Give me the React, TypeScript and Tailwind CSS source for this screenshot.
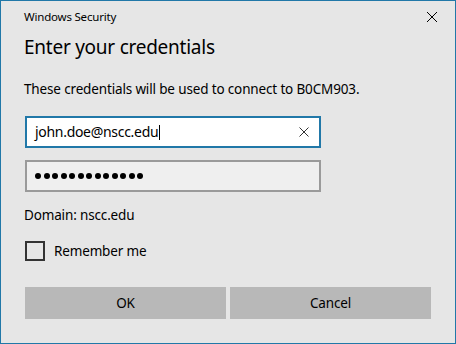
export default function App() {
  return (
    <div className="w-[456px] h-[344px] border border-[#2178a8] bg-[#e6e6e6] text-black font-['Noto_Sans',sans-serif] flex flex-col overflow-hidden">
      <div className="h-[32px] flex items-center justify-between pl-[23px] pr-[16px] shrink-0">
        <span className="text-[11.5px] leading-[16px] tracking-[-0.2px]">Windows Security</span>
        <svg width="12" height="12" viewBox="0 0 12 12" className="mr-[1px]">
          <path d="M1 1 L11 11 M11 1 L1 11" stroke="#000" strokeWidth="1" fill="none" />
        </svg>
      </div>
      <div className="pl-[23px] pr-[24px] flex flex-col">
        <div className="h-[29px] text-[19px] leading-[29px] tracking-[-0.25px]">Enter your credentials</div>
        <div className="mt-[17px] h-[20px] text-[13.5px] leading-[20px] tracking-[-0.15px]">These credentials will be used to connect to B0CM903.</div>
        <div className="mt-[17px] ml-px w-[296px] h-[32px] border-2 border-[#2178a8] bg-white flex items-center pl-[8px] pr-[8px]">
          <span className="text-[14px] leading-[20px] tracking-[-0.3px]">john.doe@nscc.edu</span>
          <span className="w-px h-[15px] bg-black ml-px" />
          <svg width="12" height="12" viewBox="0 0 12 12" className="ml-auto mr-[1px]">
            <path d="M1.5 1.5 L10.5 10.5 M10.5 1.5 L1.5 10.5" stroke="#333" strokeWidth="1" fill="none" />
          </svg>
        </div>
        <div className="mt-[12px] ml-px w-[296px] h-[32px] border-2 border-[#9a9a9a] bg-[#efefef] flex items-center gap-[2.5px] pl-[8px]">
          {Array.from({ length: 13 }).map((_, i) => (
            <span key={i} className="w-[6px] h-[6px] rounded-full bg-black" />
          ))}
        </div>
        <div className="mt-[13px] h-[20px] text-[13.5px] leading-[20px] tracking-[-0.15px]">Domain: nscc.edu</div>
        <div className="mt-[16px] ml-px h-[20px] flex items-center gap-[9px]">
          <span className="w-[20px] h-[20px] border-2 border-[#333] shrink-0" />
          <span className="text-[13.5px] leading-[20px] tracking-[-0.15px]">Remember me</span>
        </div>
        <div className="mt-[26px] ml-px flex gap-[4px]">
          <div className="w-[201px] h-[32px] bg-[#b8b8b8] flex items-center justify-center text-[13.5px] tracking-[-0.15px]">OK</div>
          <div className="w-[201px] h-[32px] bg-[#b8b8b8] flex items-center justify-center text-[13.5px] tracking-[-0.15px]">Cancel</div>
        </div>
      </div>
    </div>
  );
}
